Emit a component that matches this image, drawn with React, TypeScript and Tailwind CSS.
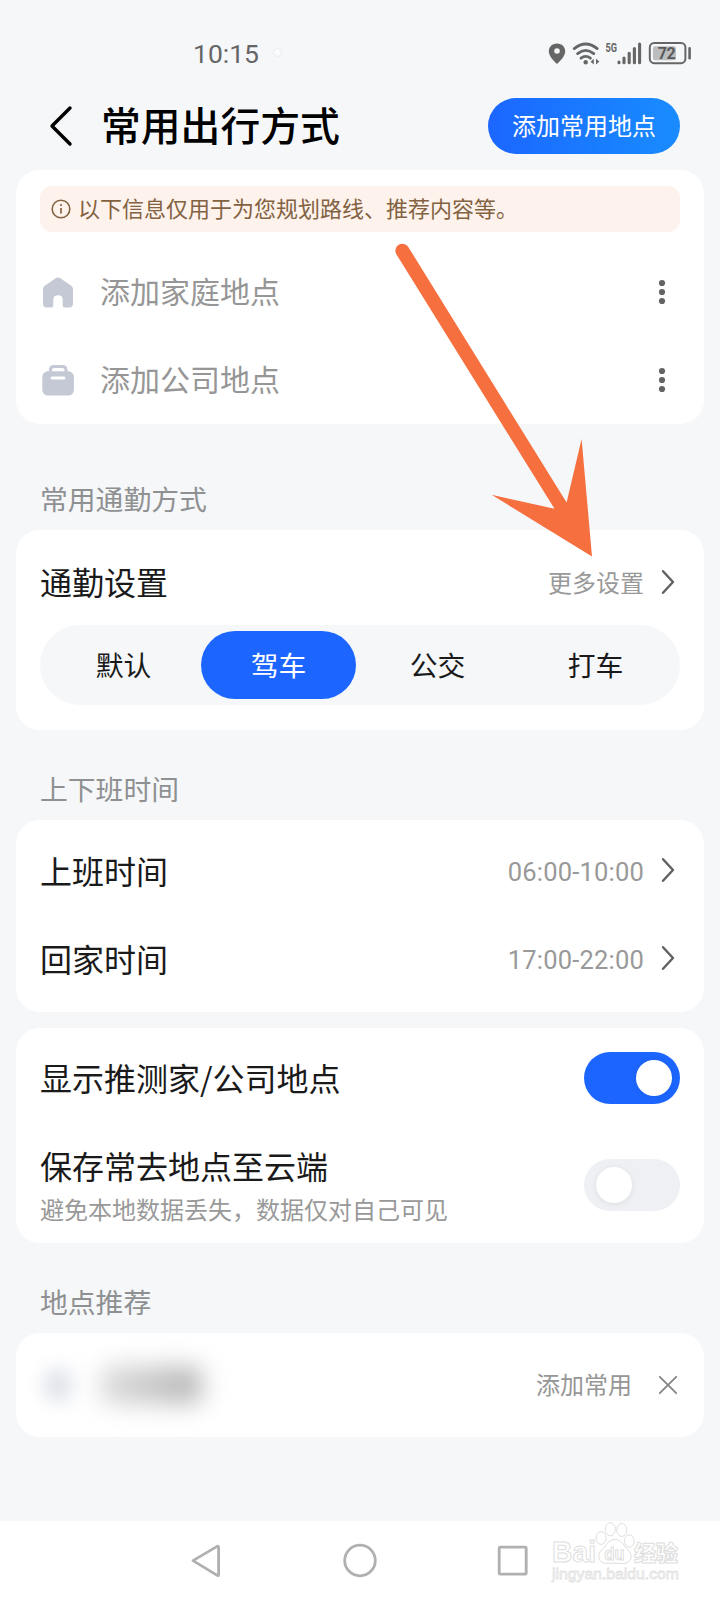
import type { ReactNode } from "react";

const dots = [4, 13, 22];

function Chevron() {
  return (
    <svg width="16" height="26" viewBox="0 0 16 26" fill="none" className="ml-[16px] mr-[4px] text-[#606060]">
      <path d="M3 2.2 L13 13 L3 23.8" stroke="currentColor" strokeWidth="2.4" strokeLinecap="round" strokeLinejoin="round" />
    </svg>
  );
}

function MoreDots() {
  return (
    <svg width="12" height="26" viewBox="0 0 12 26" className="mt-[2px] mr-[12px]">
      {dots.map((y) => (
        <circle key={y} cx="6" cy={y} r="3.1" fill="#646464" />
      ))}
    </svg>
  );
}

function HomeIcon() {
  return (
    <svg width="34" height="34" viewBox="0 0 34 34">
      <path
        d="M14.6 2.2 Q17 .6 19.4 2.2 L30.2 9.8 Q32 11.2 32 13.4 V27.5 Q32 31.6 28 31.6 H24 Q21.7 31.6 21.7 29.4 V23.6 Q21.7 19.2 17.2 19.2 Q12.3 19.2 12.3 23.6 V29.4 Q12.3 31.6 10 31.6 H6 Q2 31.6 2 27.5 V13.4 Q2 11.2 3.8 9.8 Z"
        fill="#c5c9d6"
      />
    </svg>
  );
}

function CompanyIcon() {
  return (
    <svg width="34" height="34" viewBox="0 0 34 34">
      <path d="M9.4 8.5 V6 Q9.4 2.4 13 2.4 H21.4 Q25 2.4 25 6 V8.5" fill="none" stroke="#c5c9d6" strokeWidth="3" />
      <rect x="1.3" y="7.3" width="31.6" height="24.3" rx="5.5" fill="#c5c9d6" />
      <rect x="9.6" y="12.6" width="14.8" height="3" rx="1.5" fill="#fff" />
    </svg>
  );
}

function StatusIcons() {
  return (
    <svg width="146" height="26" viewBox="0 0 146 26" fill="none" className="overflow-visible">
      {/* location */}
      <path d="M9 1.4 C4 1.4 .8 5 .8 9.3 C.8 14.5 6.5 19.7 9 22 C11.5 19.7 17.2 14.5 17.2 9.3 C17.2 5 14 1.4 9 1.4 Z M9 6.2 A2.8 2.8 0 1 1 9 11.8 A2.8 2.8 0 1 1 9 6.2 Z" fill="#666" fillRule="evenodd" />
      {/* wifi */}
      <g stroke="#666" strokeWidth="2.8" strokeLinecap="round">
        <path d="M26.2 6.6 Q37.7 -2.6 49.2 6.6" />
        <path d="M29.6 11.6 Q37.7 5.2 45.8 11.6" />
        <path d="M33 16.2 Q37.7 12.6 42.4 16.2" />
      </g>
      <circle cx="37.7" cy="20.2" r="2.2" fill="#666" />
      <path d="M45.8 16.8 V22.4 L42.6 19.8 Z M48 16.8 V22.4 L51.4 19.6 Z" fill="#666" />
      {/* mobile signal */}
      <text x="57.6" y="10.2" fontSize="13" fontWeight="700" textLength="11.5" lengthAdjust="spacingAndGlyphs" fontFamily="Roboto" fill="#666">
        5G
      </text>
      <g stroke="#666" strokeWidth="3.1" strokeLinecap="round">
        <path d="M71 20 V20.8" />
        <path d="M76 16 V20.8" />
        <path d="M81.2 11.2 V20.8" />
        <path d="M86.4 6.6 V20.8" />
        <path d="M91.6 2 V20.8" />
      </g>
      {/* battery */}
      <rect x="101.8" y="1" width="35.6" height="20.2" rx="4.4" stroke="#666" strokeWidth="2" />
      <rect x="105" y="4.2" width="23" height="14" rx="2" fill="#bcbdbe" />
      <path d="M141.6 6.2 V16.2" stroke="#666" strokeWidth="2.6" strokeLinecap="round" />
      <text x="109.8" y="17" fontSize="16" fontWeight="700" textLength="18" fontFamily="Roboto" fill="#5a5a5a">
        72
      </text>
    </svg>
  );
}

function Card({ className, children }: { className: string; children: ReactNode }) {
  return <section className={`mx-4 rounded-[24px] bg-white px-6 ${className}`}>{children}</section>;
}

function SectionTitle({ className, children }: { className: string; children: ReactNode }) {
  return <h2 className={`flex items-center pl-[40px] text-[27.8px] text-[#8f9092] ${className}`}>{children}</h2>;
}

function PlaceRow({ icon, label }: { icon: ReactNode; label: string }) {
  return (
    <div className="flex h-[88px] items-center">
      <span className="mt-[3px] ml-[1px] w-[59px]">{icon}</span>
      <span className="mb-[2px] flex-1 text-[30px] leading-none text-[#969696]">{label}</span>
      <MoreDots />
    </div>
  );
}

function TimeRow({ label, value }: { label: string; value: string }) {
  return (
    <div className="flex h-[88px] items-center">
      <span className="mb-[1px] flex-1 text-[32px] leading-none text-[#1a1a1a]">{label}</span>
      <span className="mt-[6px] font-[Roboto] text-[25.5px] leading-none tracking-[0.2px] text-[#999]">{value}</span>
      <Chevron />
    </div>
  );
}

function Toggle({ on }: { on: boolean }) {
  return (
    <div className={`flex h-[52px] w-24 items-center rounded-full ${on ? "justify-end bg-[#1c66ff] pr-2" : "bg-[#eef0f4] pl-[12px]"}`}>
      <div className="size-9 rounded-full bg-white shadow-[0_1px_6px_rgba(0,0,0,0.08)]" />
    </div>
  );
}

function Watermark() {
  return (
    <svg width="132" height="66" viewBox="0 0 132 66" fill="#fff" stroke="#dedede" strokeWidth="1" className="absolute left-[551px] top-0 overflow-visible">
      <text x="1" y="41" fontSize="29" fontWeight="700" textLength="44" lengthAdjust="spacingAndGlyphs" fontFamily="Liberation Sans">Bai</text>
      <ellipse cx="50" cy="17" rx="5" ry="6.4" />
      <ellipse cx="59.3" cy="8.2" rx="5" ry="6.6" />
      <ellipse cx="70.8" cy="9" rx="5" ry="6.4" />
      <ellipse cx="78.2" cy="20" rx="5" ry="6.2" />
      <path d="M64 18.5 C57 18.5 55.5 25 51 28.5 C45 34 48 42.5 55 42.3 C60 42 68 42.3 72 42.5 C80 42.5 83 34.5 77 29 C72.5 25 71 18.5 64 18.5 Z" />
      <text x="53.5" y="38.5" fontSize="18" fontWeight="700" textLength="20" lengthAdjust="spacingAndGlyphs" fontFamily="Liberation Sans">du</text>
      <text x="83" y="39.5" fontSize="22" fontWeight="900" textLength="44">经验</text>
      <text x="1" y="58" fontSize="15" textLength="127" lengthAdjust="spacingAndGlyphs" fontFamily="Liberation Sans" fill="#fff" stroke="#e2e2e2" strokeWidth="0.8">jingyan.baidu.com</text>
    </svg>
  );
}

const modes = [
  { name: "默认", width: "w-[155px]" },
  { name: "驾车", width: "w-[155px]", active: true },
  { name: "公交", width: "w-[163px]" },
  { name: "打车", width: "w-[153px]" },
];

export default function App() {
  return (
    <div className="relative flex h-[1600px] w-[720px] flex-col overflow-hidden bg-[#f5f7f9] font-['Noto_Sans_CJK_SC',sans-serif]">
      <div className="flex h-[84px] shrink-0 items-end pb-[16px]">
        <span className="mb-[1px] ml-[193px] font-[Roboto] text-[26.5px] leading-[26px] text-[#666]">10:15</span>
        <span className="ml-[14px] mb-[11px] size-[9px] rounded-full border border-[#ececed] bg-white/50" />
        <span className="ml-auto mr-[26px]">
          <StatusIcons />
        </span>
      </div>

      <header className="flex h-[86px] shrink-0 items-center pr-10 pb-[2px]">
        <svg width="26" height="42" viewBox="0 0 26 42" fill="none" className="ml-[48px]">
          <path d="M22 3 L4 21 L22 39" stroke="#000" strokeWidth="3.4" strokeLinecap="round" strokeLinejoin="round" />
        </svg>
        <h1 className="mb-[4px] ml-[27px] flex-1 text-[39.8px] font-medium leading-none text-black">常用出行方式</h1>
        <button className="h-14 w-48 rounded-full bg-linear-to-r from-[#1c66ff] to-[#1a8cff] pb-[2px] text-[24px] leading-none text-white">
          添加常用地点
        </button>
      </header>

      <Card className="h-[254px] shrink-0 pt-4">
        <div className="mb-[15px] flex h-[46px] items-center rounded-[12px] bg-[#fef3ec] pl-[11px] text-[22px] leading-none text-[#836242]">
          <svg width="20" height="20" viewBox="0 0 20 20" fill="none" className="mr-[7px]">
            <circle cx="10" cy="10" r="8.8" stroke="#836242" strokeWidth="1.6" />
            <circle cx="10" cy="6" r="1.1" fill="#836242" />
            <path d="M10 9 V14.5" stroke="#836242" strokeWidth="1.7" />
          </svg>
          <span className="mb-[4px]">以下信息仅用于为您规划路线、推荐内容等。</span>
        </div>
        <PlaceRow icon={<HomeIcon />} label="添加家庭地点" />
        <PlaceRow icon={<CompanyIcon />} label="添加公司地点" />
      </Card>

      <SectionTitle className="h-[106px] shrink-0 pt-[44px]">常用通勤方式</SectionTitle>
      <Card className="h-[200px] shrink-0 pt-[8px]">
        <div className="flex h-[87px] items-center">
          <span className="mb-[2px] flex-1 text-[32px] leading-none text-[#1a1a1a]">通勤设置</span>
          <span className="text-[24px] leading-none text-[#999]">更多设置</span>
          <Chevron />
        </div>
        <div className="flex h-20 items-center rounded-full bg-[#f5f7f9] pl-[6px] text-[27.8px] leading-none">
          {modes.map((mode) => (
            <div
              key={mode.name}
              className={`flex h-[68px] items-center justify-center rounded-full pb-[1px] ${mode.width} ${mode.active ? "bg-[#1c66ff] text-white" : "text-[#1a1a1a]"}`}
            >
              {mode.name}
            </div>
          ))}
        </div>
      </Card>

      <SectionTitle className="h-[90px] shrink-0 pt-[28px]">上下班时间</SectionTitle>
      <Card className="h-[192px] shrink-0 pt-[6px]">
        <TimeRow label="上班时间" value="06:00-10:00" />
        <TimeRow label="回家时间" value="17:00-22:00" />
      </Card>

      <Card className="mt-4 h-[215px] shrink-0 pt-6">
        <div className="flex items-center justify-between">
          <span className="mb-[3px] text-[32px] leading-none text-[#1a1a1a]">显示推测家/公司地点</span>
          <Toggle on />
        </div>
        <div className="mt-[36px] flex items-center justify-between">
          <div>
            <div className="text-[32px] leading-[50px] text-[#1a1a1a]">保存常去地点至云端</div>
            <div className="text-[24px] leading-[37px] text-[#999]">避免本地数据丢失，数据仅对自己可见</div>
          </div>
          <div className="mt-[3px]">
            <Toggle on={false} />
          </div>
        </div>
      </Card>

      <SectionTitle className="h-[90px] shrink-0 pt-[28px]">地点推荐</SectionTitle>
      <Card className="flex h-[104px] shrink-0 items-center">
        {/* hidden address */}
        <div className="ml-[4px] h-[34px] w-[28px] rounded-full bg-[#dfe2ea] blur-[9px]" />
        <div className="ml-[28px] h-[38px] w-[102px] rounded-[10px] bg-linear-to-r from-[#dedede] to-[#b5b5b5] blur-[12px]" />
        <span className="ml-auto mb-[2px] text-[24px] leading-none text-[#969696]">添加常用</span>
        <svg width="20" height="20" viewBox="0 0 20 20" className="ml-[26px] mr-[2px]">
          <path d="M1.8 1.8 L18.2 18.2 M18.2 1.8 L1.8 18.2" stroke="#858585" strokeWidth="1.8" strokeLinecap="round" />
        </svg>
      </Card>

      <nav className="relative mt-auto h-[79px] shrink-0 bg-white">
        <svg width="720" height="79" viewBox="0 0 720 79" fill="none" stroke="#b0b0b0" strokeWidth="2.8" strokeLinejoin="round">
          <path d="M193 39.6 L217.2 25.4 Q218.6 24.8 218.6 26.4 V53.4 Q218.6 55.2 217.2 54.4 Z" />
          <circle cx="360" cy="39.5" r="15.3" />
          <rect x="499.2" y="26.2" width="27" height="27" rx="1" />
        </svg>
        <Watermark />
      </nav>

      {/* pointer to the commute settings */}
      <svg width="720" height="1600" viewBox="0 0 720 1600" className="pointer-events-none absolute left-0 top-0" fill="#f66f3f">
        <path d="M396.5 254.5 A6.9 6.9 0 0 1 408.3 247 L566.6 502.5 L581.6 439 L592 556.5 L491.6 494.8 L554.5 508.8 Z" />
      </svg>
    </div>
  );
}
